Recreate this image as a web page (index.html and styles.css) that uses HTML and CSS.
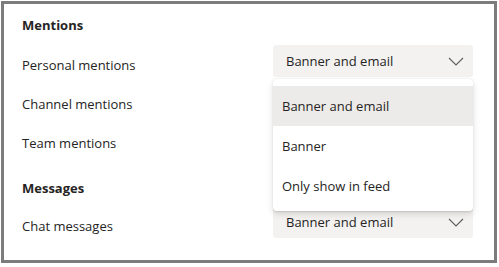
FILE: index.html
```html
<!DOCTYPE html>
<html lang="en">
  <head>
    <meta charset="UTF-8" />
    <meta name="viewport" content="width=device-width, initial-scale=1.0" />
    <title>Notification settings</title>
    <link rel="stylesheet" href="styles.css">
  </head>
  <body>
    <div class="frame">
      <h2 class="section-title">Mentions</h2>
      <div class="setting-row first-row">
        <span class="setting-label">Personal mentions</span>
        <div class="select is-open">
          <span class="select-value">Banner and email</span>
          <svg class="chevron" width="16" height="9" viewBox="0 0 16 9">
            <polyline points="1,1 8,8 15,1" />
          </svg>
          <ul class="menu">
            <li class="menu-item is-selected">Banner and email</li>
            <li class="menu-item">Banner</li>
            <li class="menu-item">Only show in feed</li>
          </ul>
        </div>
      </div>
      <!-- these two selects sit under the open menu -->
      <div class="setting-row">
        <span class="setting-label">Channel mentions</span>
        <div class="select"></div>
      </div>
      <div class="setting-row">
        <span class="setting-label">Team mentions</span>
        <div class="select"></div>
      </div>

      <h2 class="section-title messages-title">Messages</h2>
      <div class="setting-row first-row">
        <span class="setting-label">Chat messages</span>
        <div class="select">
          <span class="select-value">Banner and email</span>
          <svg class="chevron" width="16" height="9" viewBox="0 0 16 9">
            <polyline points="1,1 8,8 15,1" />
          </svg>
        </div>
      </div>
    </div>
  </body>
</html>
```

FILE: styles.css
```css
* {
  box-sizing: border-box;
  margin: 0;
  padding: 0;
}

body {
  background: #fff;
  color: #252423;
  font-family: 'Segoe UI', 'Open Sans', sans-serif;
  font-size: 13px;
  line-height: 20px;
}

.frame {
  width: 496px;
  height: 262px;
  margin: 1px 0 0 1px;
  border: 3px solid #7c7c7c;
  padding: 11px 21px 0 18px;
  overflow: hidden;
}

.section-title {
  font-size: 13px;
  font-weight: 700;
  line-height: 20px;
}

.messages-title {
  margin-top: 23px;
}

.setting-row {
  display: flex;
  justify-content: space-between;
  align-items: flex-start;
  margin-top: 7px;
}

.setting-row.first-row {
  margin-top: 10px;
}

.messages-title + .setting-row.first-row {
  margin-top: 8px;
}

.setting-label {
  padding-top: 10px;
}

.select {
  position: relative;
  display: flex;
  align-items: center;
  justify-content: space-between;
  width: 200px;
  height: 32px;
  padding: 0 9px 0 13px;
  background: #f3f2f1;
  border-radius: 3px;
}

.chevron {
  fill: none;
  stroke: #605e5c;
  stroke-width: 1.1;
}

.menu {
  position: absolute;
  top: 34px;
  left: 0;
  z-index: 10;
  width: 200px;
  padding: 7px 0 5px 0;
  list-style: none;
  background: #fff;
  border-radius: 4px;
  box-shadow: 0 3px 7px rgba(0, 0, 0, 0.13), 0 0.6px 1.8px rgba(0, 0, 0, 0.11);
}

.menu-item {
  height: 40px;
  line-height: 40px;
  padding-left: 9px;
}

.menu-item.is-selected {
  background: #edebe9;
}
```
